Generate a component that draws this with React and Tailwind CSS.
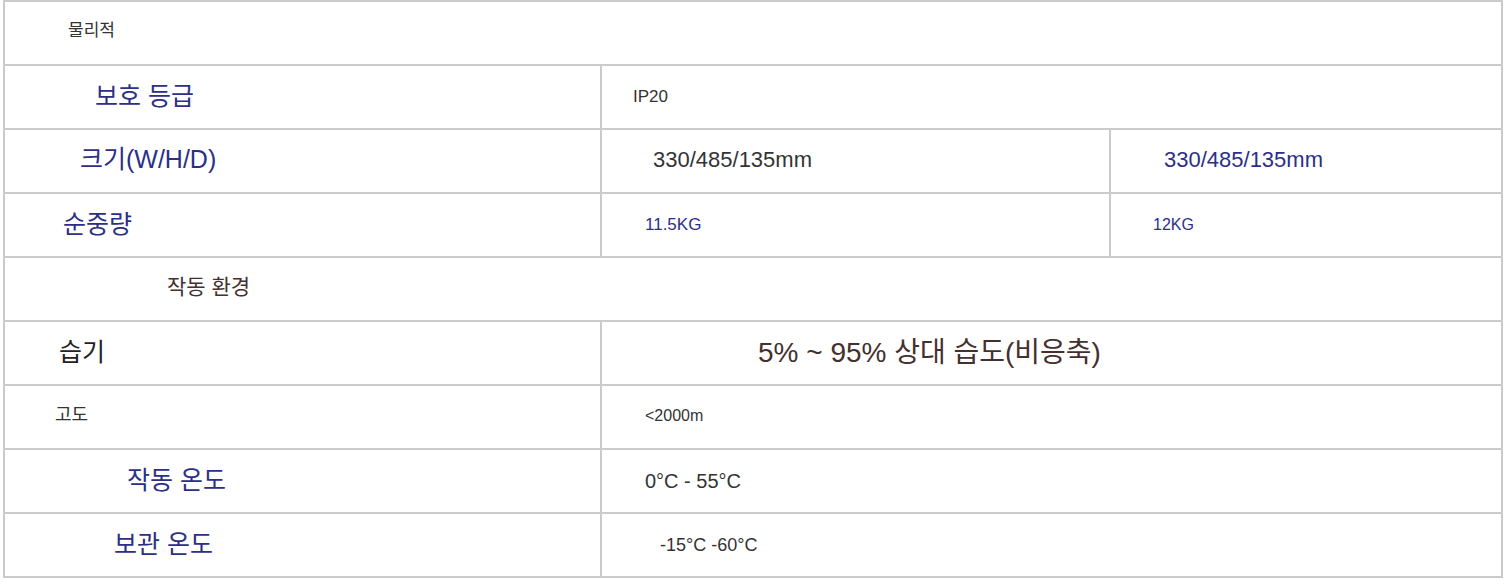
import React from 'react';

const BLUE = 'text-[#2c2f88]';
const DARK = 'text-[#333333]';
const BROWN = 'text-[#43302f]';

// Spec rows: a single header cell, or label + one or two values
const rows = [
  { header: '물리적', cls: `text-[17px] pl-[63px] pb-1 ${DARK}` },
  {
    label: { text: '보호 등급', cls: `text-[25px] pl-[90px] ${BLUE}` },
    values: [{ text: 'IP20', cls: `text-[17px] pl-[31px] ${DARK}`, span: true }],
  },
  {
    label: { text: '크기(W/H/D)', cls: `text-[25px] pl-[75px] pb-[3px] ${BLUE}` },
    values: [
      { text: '330/485/135mm', cls: `text-[22px] pl-[51px] pb-[3px] ${DARK}` },
      { text: '330/485/135mm', cls: `text-[22px] pl-[53px] pb-[3px] ${BLUE}` },
    ],
  },
  {
    label: { text: '순중량', cls: `text-[25px] pl-[58px] ${BLUE}` },
    values: [
      { text: '11.5KG', cls: `text-[17px] pl-[43px] ${BLUE}` },
      { text: '12KG', cls: `text-[16px] pl-[42px] ${BLUE}` },
    ],
  },
  { header: '작동 환경', cls: `text-[21px] pl-[162px] pb-1 ${BROWN}` },
  {
    label: { text: '습기', cls: `text-[25px] pl-[54px] text-[#222222]` },
    values: [{ text: '5% ~ 95% 상대 습도(비응축)', cls: `text-[28px] pl-[156px] ${BROWN}`, span: true }],
  },
  {
    label: { text: '고도', cls: `text-[18px] pl-[50px] pb-[3px] ${DARK}` },
    values: [{ text: '<2000m', cls: `text-[16px] pl-[43px] pb-[3px] ${DARK}`, span: true }],
  },
  {
    label: { text: '작동 온도', cls: `text-[25px] pl-[122px] ${BLUE}` },
    values: [{ text: '0°C - 55°C', cls: `text-[20px] pl-[43px] ${DARK}`, span: true }],
  },
  {
    label: { text: '보관 온도', cls: `text-[25px] pl-[109px] ${BLUE}` },
    values: [{ text: '-15°C -60°C', cls: `text-[18px] pl-[58px] ${DARK}`, span: true }],
  },
];

const cellBase = 'flex items-center h-16 border-r-2 border-b-2 border-[#cacaca] whitespace-nowrap';

const App = () => {
  return (
    <div className="bg-white w-[1509px] h-[585px] font-['Liberation_Sans','Noto_Sans_CJK_KR',sans-serif]">
      <div className="ml-[3px] w-[1500px] border-l-2 border-t-2 border-[#cacaca]">
        {rows.map((row, i) => (
          <div key={i} className="grid grid-cols-[597px_509px_392px]">
            {row.header ? (
              <div className={`col-span-3 ${cellBase} ${row.cls}`}>{row.header}</div>
            ) : (
              <>
                <div className={`${cellBase} ${row.label.cls}`}>{row.label.text}</div>
                {row.values.map((v, j) => (
                  <div key={j} className={`${v.span ? 'col-span-2' : ''} ${cellBase} ${v.cls}`}>
                    {v.text}
                  </div>
                ))}
              </>
            )}
          </div>
        ))}
      </div>
    </div>
  );
};

export default App;
